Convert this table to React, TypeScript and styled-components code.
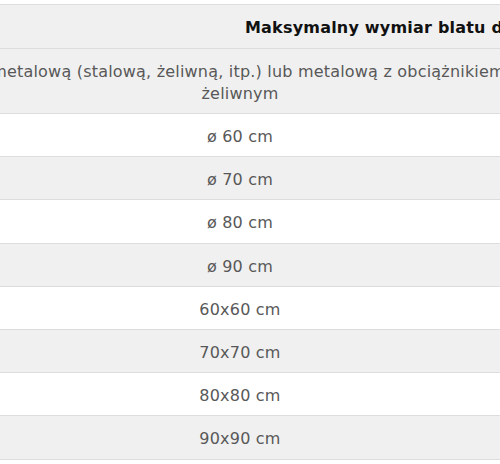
import React from "react";
import styled, { createGlobalStyle } from "styled-components";

const GlobalStyle = createGlobalStyle`
  html, body {
    margin: 0;
    padding: 0;
    background: #ffffff;
  }
  body {
    font-family: "DejaVu Sans", Verdana, sans-serif;
  }
`;

const Viewport = styled.div`
  width: 500px;
  height: 464px;
  overflow: hidden;
  padding-top: 4px;
  box-sizing: border-box;
  background: #ffffff;
`;

const Table = styled.table`
  border-collapse: collapse;
  table-layout: fixed;
  width: 1100px;
  margin-left: -40px;
  border-top: 1px solid #dddddd;
`;

const Row = styled.tr<{ $shade: boolean }>`
  background: ${(p) => (p.$shade ? "#f0f0f0" : "#ffffff")};
  border-bottom: 1px solid #dddddd;
`;

const HeadCell = styled.th`
  padding: 12px 10px 8px 285px;
  text-align: left;
  font-weight: bold;
  font-size: 16px;
  line-height: 22.5px;
  letter-spacing: 0.2px;
  color: #111111;
  white-space: nowrap;
`;

const Cell = styled.td<{ $indent?: number }>`
  padding: 12px 10px 8px;
  text-align: center;
  font-size: 16px;
  line-height: 22.2px;
  letter-spacing: 0.2px;
  text-indent: ${(p) => p.$indent ?? 0}px;
  color: #585858;
`;

const sizes = [
  "ø 60 cm",
  "ø 70 cm",
  "ø 80 cm",
  "ø 90 cm",
  "60x60 cm",
  "70x70 cm",
  "80x80 cm",
  "90x90 cm",
];

export default function App() {
  return (
    <>
      <GlobalStyle />
      <Viewport>
        <Table>
          <colgroup>
            <col style={{ width: 560 }} />
            <col />
          </colgroup>
          <thead>
            <Row $shade>
              <HeadCell colSpan={2}>Maksymalny wymiar blatu dla podstawy</HeadCell>
            </Row>
          </thead>
          <tbody>
            <Row $shade>
              <Cell $indent={16}>
                metalową (stalową, żeliwną, itp.) lub metalową z obciążnikiem żeliwnym
              </Cell>
              <Cell />
            </Row>
            {sizes.map((s, i) => (
              <Row key={s} $shade={i % 2 === 1}>
                <Cell>{s}</Cell>
                <Cell />
              </Row>
            ))}
          </tbody>
        </Table>
      </Viewport>
    </>
  );
}
